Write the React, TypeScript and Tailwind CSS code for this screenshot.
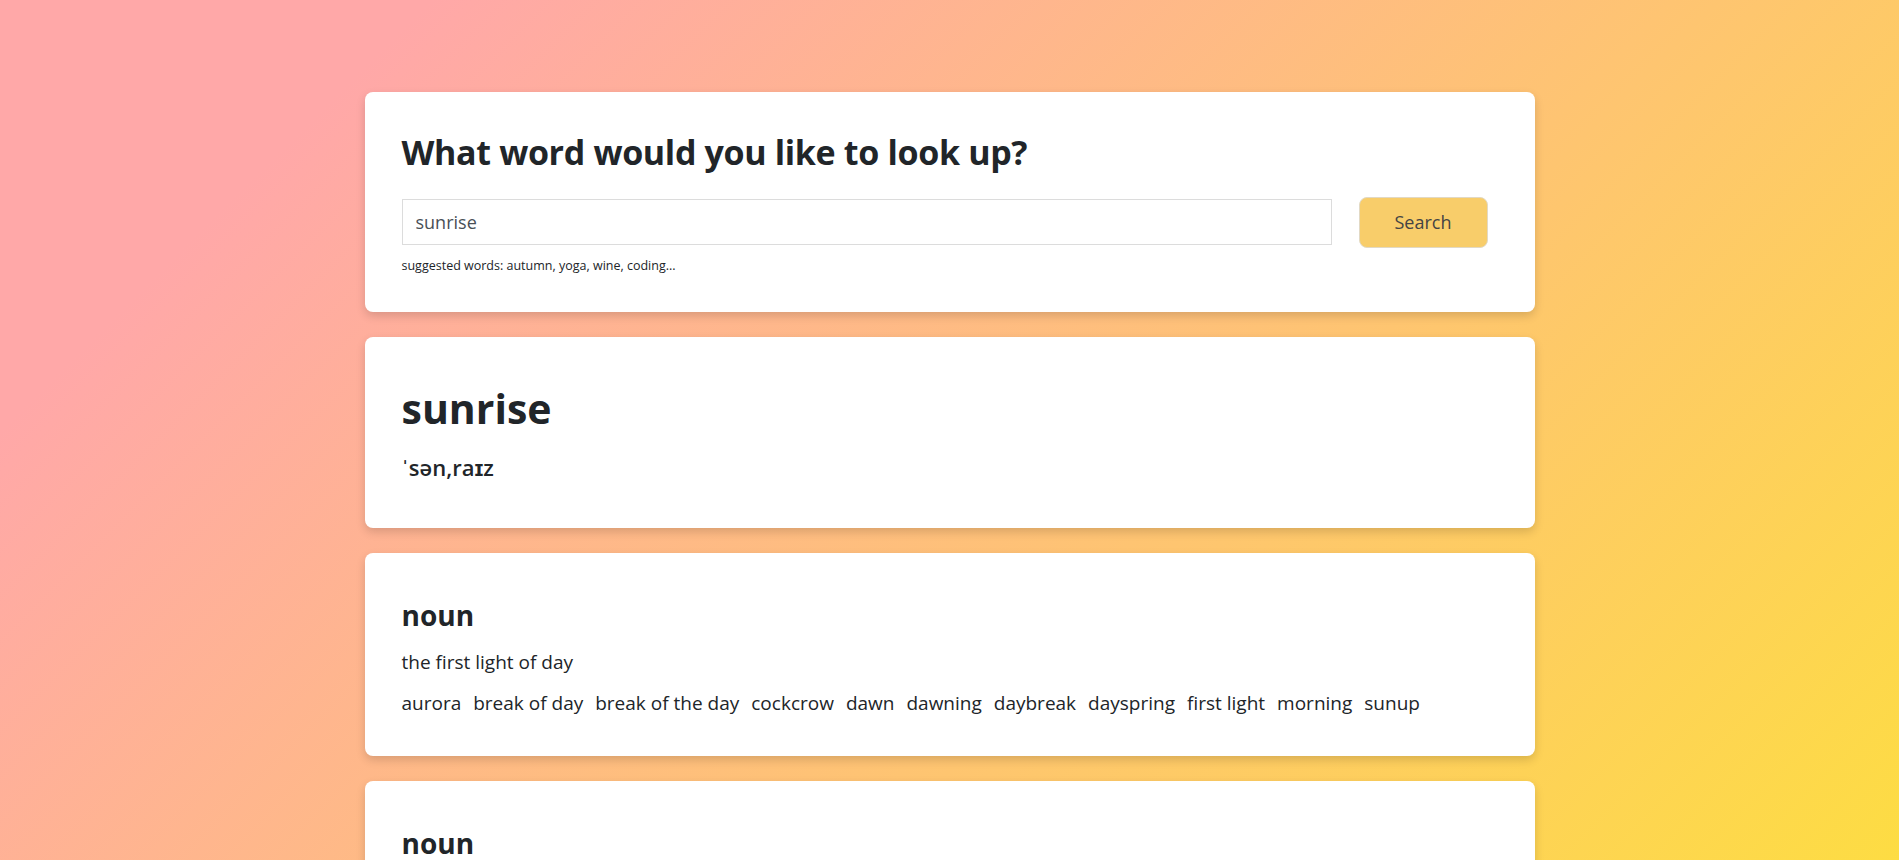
import React from "react";

const senses = [
  {
    pos: "noun",
    def: "the first light of day",
    syns: ["aurora", "break of day", "break of the day", "cockcrow", "dawn", "dawning", "daybreak", "dayspring", "first light", "morning", "sunup"],
  },
  {
    pos: "noun",
    def: "the daily event of the sun rising above the horizon",
    syns: ["sunup"],
  },
  {
    pos: "adjective",
    def: "at or around sunrise",
    syns: [],
  },
];

export default function App() {
  return (
    <div className="h-[860px] w-full overflow-hidden font-['Open_Sans',sans-serif] text-[#212529]">
      <div className="min-h-[2400px] w-full bg-[linear-gradient(135deg,#FFA8A8_10%,#FCFF00_100%)] pt-[92px]">
        <div className="mx-auto flex w-[1170px] flex-col gap-[25px]">
          <div className="rounded-lg bg-white pl-[37px] pr-[47px] pt-[40px] pb-[36px] shadow-[0_4px_10px_rgba(0,0,0,0.15)]">
            <h1 className="text-[34px] font-bold leading-[1.2] tracking-[-0.01em]">What word would you like to look up?</h1>
            <div className="mt-[24px] flex h-[51px] items-center gap-[27px]">
              <input
                type="text"
                defaultValue="sunrise"
                className="h-[46px] w-[930px] border border-[#dcdcdc] bg-white px-[13px] text-[18px] text-[#495057] outline-none"
              />
              <button className="h-[51px] w-[129px] rounded-lg border border-[#e2d9c4] bg-[#F8CD6A] text-[18px] text-[#444]">
                Search
              </button>
            </div>
            <p className="mt-[9px] text-[12.5px] leading-[1.5]">suggested words: autumn, yoga, wine, coding...</p>
          </div>

          <div className="rounded-lg bg-white pl-[37px] pr-[47px] pt-[47px] pb-[44px] shadow-[0_4px_10px_rgba(0,0,0,0.15)]">
            <h2 className="text-[41px] font-bold leading-[1.2]">sunrise</h2>
            <p className="mt-[18px] text-[22px] font-semibold leading-[1.5]">ˈsən,raɪz</p>
          </div>

          {senses.map((s, i) => (
            <div key={i} className="rounded-lg bg-white pl-[37px] pr-[47px] pt-[46px] pb-[38px] shadow-[0_4px_10px_rgba(0,0,0,0.15)]">
              <h3 className="text-[28px] font-bold leading-[1.15]">{s.pos}</h3>
              <p className="mt-[17px] text-[19px] leading-[1.5]">{s.def}</p>
              <div className="mt-[13px] flex flex-wrap gap-x-[12px] text-[19px] leading-[1.5]">
                {s.syns.map((w) => (
                  <span key={w}>{w}</span>
                ))}
              </div>
            </div>
          ))}
        </div>
      </div>
    </div>
  );
}
